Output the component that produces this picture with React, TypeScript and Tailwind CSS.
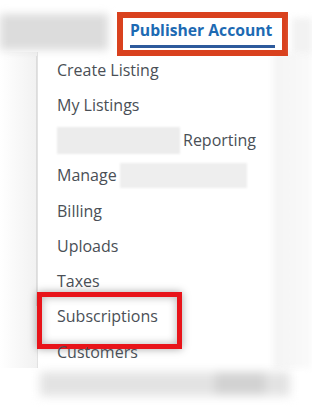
import React from "react";

const ITEMS = [
  { label: "Create Listing" },
  { label: "My Listings" },
  { label: "Reporting", blurBefore: true },
  { label: "Manage", blurAfter: true },
  { label: "Billing" },
  { label: "Uploads" },
  { label: "Taxes" },
  { label: "Subscriptions", marked: true },
  { label: "Customers" },
];

export default function App() {
  return (
    <div
      className="w-[312px] h-[418px] overflow-hidden bg-white flex flex-col"
      style={{ fontFamily: '"Open Sans", "Noto Sans", sans-serif' }}
    >
      {/* header row */}
      <div className="relative z-10 flex items-start h-[56px] pt-[12px]">
        <div className="mt-[2px] w-[108px] h-[36px] bg-[#dcdcdc] blur-[4px]" />
        <div className="ml-[9px] w-[171px] h-[44px] border-[6px] border-[#d9411e] bg-white">
          <div className="mx-[7px] flex flex-col">
            <span className="text-[15.7px] font-bold leading-[24px] text-[#1d6ab3] whitespace-nowrap">
              Publisher Account
            </span>
            <div className="mt-[3px] h-[3px] w-full bg-[#2d5a9c]" />
          </div>
        </div>
        <div className="ml-[4px] mt-[6px] w-[20px] h-[36px] bg-[#f2f2f2] blur-[3px]" />
      </div>

      {/* body: gutter, menu, gutter */}
      <div className="flex -mt-[4px] h-[316px]">
        <div className="w-[37px] pt-[4px] bg-gradient-to-r from-white to-[#f1f1f1]">
          <div className="ml-auto w-px h-[250px] bg-[#dcdcdc]" />
        </div>

        {/* dropdown menu */}
        <ul className="w-[236px] pl-[19px] bg-white border-l border-[#e2e2e2]">
          {ITEMS.map((item) => (
            <li
              key={item.label}
              className="relative flex items-center h-[35.25px] text-[16px] text-[#4a4f56] whitespace-nowrap"
            >
              {item.blurBefore && (
                <span className="mr-[3px] w-[123px] h-[27px] bg-[#ececec] blur-[1px]" />
              )}
              {item.label}
              {item.blurAfter && (
                <span className="ml-[3px] w-[127px] h-[25px] bg-[#eeeeee] blur-[1px]" />
              )}
              {item.marked && (
                <span className="absolute -left-[20px] -top-[7px] w-[145px] h-[57px] border-[5px] border-[#e8141a] shadow-[0_0_8px_rgba(0,0,0,0.35),inset_0_0_8px_rgba(0,0,0,0.3)]" />
              )}
            </li>
          ))}
        </ul>

        <div className="flex-1 bg-gradient-to-r from-[#f4f4f4] to-[#fafafa] blur-[3px]" />
      </div>

      {/* blurred strip under the menu */}
      <div className="flex mt-[4px] pl-[40px]">
        <div className="flex w-[250px] h-[24px] bg-[#e3e3e3] blur-[5px]">
          <div className="ml-auto mr-[25px] w-[50px] h-[22px] bg-[#d2d2d2]" />
        </div>
      </div>
    </div>
  );
}
